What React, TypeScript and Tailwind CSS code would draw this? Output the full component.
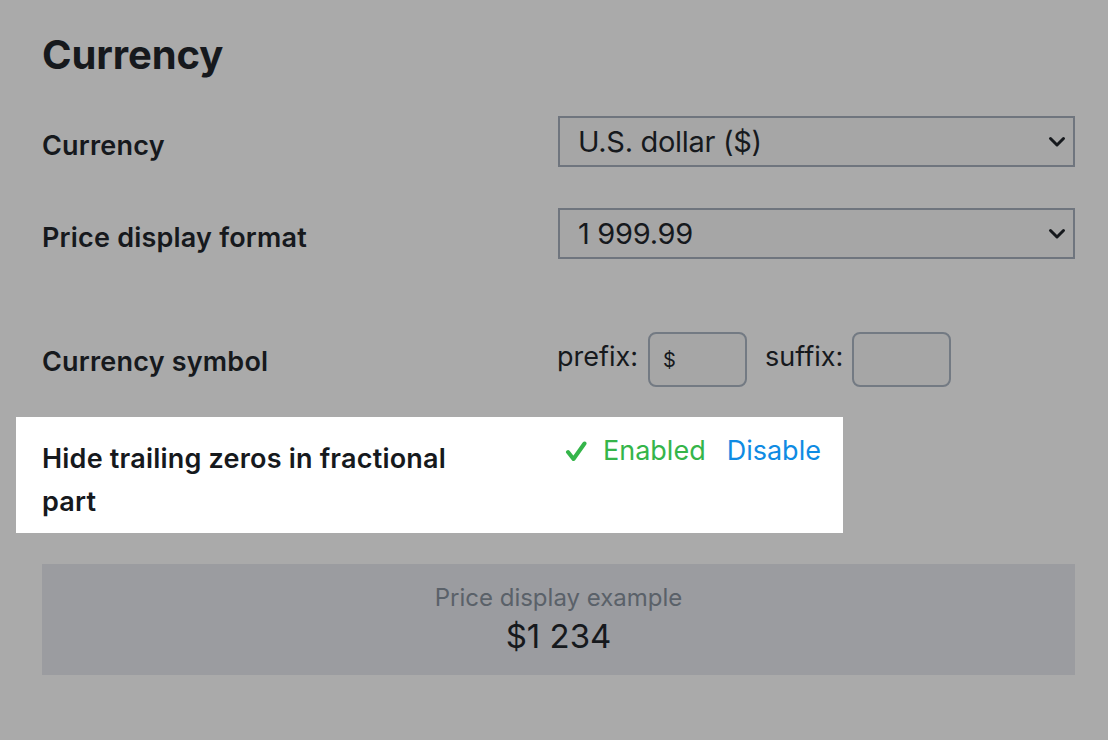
const font = { fontFamily: "Inter, 'Noto Sans', sans-serif" };

function Chevron() {
  return (
    <svg width="18" height="12" viewBox="0 0 18 12" className="absolute right-[7px] top-1/2 -translate-y-1/2">
      <path d="M2.5 2.5 L9 9 L15.5 2.5" fill="none" stroke="#16191d" strokeWidth="3" strokeLinecap="round" strokeLinejoin="round" />
    </svg>
  );
}

function Select({ value }: { value: string }) {
  return (
    <div className="relative h-[51px] w-[517px] border-2 border-[#6f757e] bg-[#a6a6a6] flex items-center pl-[18px]">
      <span className="text-[29px] text-[#16191d] tracking-[-0.3px]">{value}</span>
      <Chevron />
    </div>
  );
}

export default function App() {
  return (
    <div className="min-h-[740px] w-[1108px] bg-[#aaaaaa] text-[#16191d]" style={font}>
      <div className="pl-[42px] pr-[33px] pt-[32px]">
        <h1 className="text-[40px] font-bold leading-[46px] tracking-[-0.1px]">Currency</h1>

        <div className="mt-[38px] grid grid-cols-[516px_517px] items-start">
          <div className="pt-[14px] text-[27px] font-semibold leading-[32px] tracking-[0.2px]">Currency</div>
          <Select value="U.S. dollar ($)" />
        </div>

        <div className="mt-[41px] grid grid-cols-[516px_517px] items-start">
          <div className="pt-[14px] text-[27px] font-semibold leading-[32px] tracking-[0.2px]">Price display format</div>
          <Select value="1 999.99" />
        </div>

        <div className="mt-[73px] grid grid-cols-[516px_517px] items-start">
          <div className="pt-[14px] text-[27px] font-semibold leading-[32px] tracking-[0.2px]">Currency symbol</div>
          <div className="flex items-center h-[55px] text-[27px]">
            <span className="mb-[5px] -ml-[1px]">prefix:</span>
            <div className="ml-[10px] h-[55px] w-[99px] rounded-[8px] border-2 border-[#737a83] bg-[#a6a6a6] flex items-center pl-[13px] text-[20px]">
              $
            </div>
            <span className="ml-[18px] mb-[5px]">suffix:</span>
            <div className="ml-[9px] h-[55px] w-[99px] rounded-[8px] border-2 border-[#737a83] bg-[#a6a6a6]" />
          </div>
        </div>

        <div className="mt-[30px] -ml-[26px] w-[827px] h-[116px] bg-white pl-[26px] grid grid-cols-[516px_285px] items-start">
          <div className="pt-[20px] w-[430px] text-[27px] font-semibold leading-[43px] tracking-[0.2px]">
            Hide trailing zeros in fractional part
          </div>
          <div className="pt-[18px] flex items-center text-[27px] leading-[32px]">
            <svg width="22" height="22" viewBox="0 0 22 22" className="ml-[7px]">
              <path d="M3 12 L8.5 19 L19.5 3.5" fill="none" stroke="#35b54a" strokeWidth="4" strokeLinecap="round" strokeLinejoin="round" />
            </svg>
            <span className="ml-[16px] text-[#35b54a]">Enabled</span>
            <span className="ml-[21px] text-[#0f8be3]">Disable</span>
          </div>
        </div>

        <div className="mt-[31px] h-[111px] bg-[#9b9ca0] flex flex-col items-center pt-[20px]">
          <div className="text-[24px] leading-[28px] text-[#5a6169]">Price display example</div>
          <div className="mt-[4px] text-[33px] leading-[40px] text-[#16191d]">$1 234</div>
        </div>
      </div>
    </div>
  );
}
